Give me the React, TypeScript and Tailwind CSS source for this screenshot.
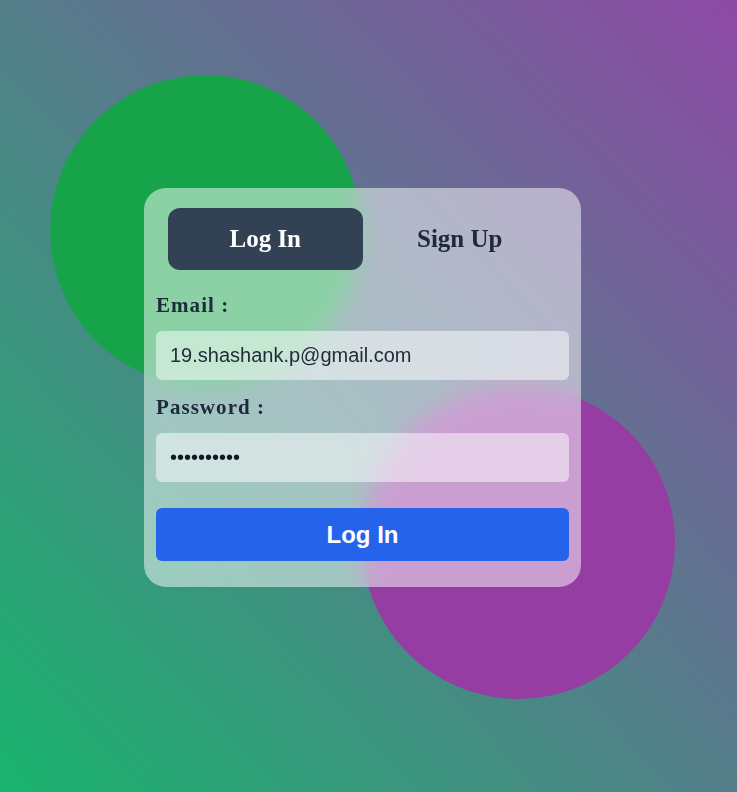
import React, { useState } from 'react';

export default function App() {
  const [tab, setTab] = useState<'login' | 'signup'>('login');
  const [email, setEmail] = useState('19.shashank.p@gmail.com');
  const [password, setPassword] = useState('1234567890');

  return (
    <div className="relative h-[792px] overflow-hidden bg-[linear-gradient(to_top_right,#19b46e,#8e49a6)] flex items-center justify-center pr-3 pb-[17px]">
      {/* background blobs */}
      <div className="absolute left-[50px] top-[75px] w-[311px] h-[311px] rounded-full bg-[#17a34a]" />
      <div className="absolute left-[362px] top-[386px] w-[313px] h-[313px] rounded-full bg-[#963da3]" />

      <div className="relative w-[437px] rounded-[22px] bg-white/50 backdrop-blur-md pb-[26px]">
        <div className="grid grid-cols-2 px-6 pt-5 font-['Liberation_Serif',serif]">
          <button
            onClick={() => setTab('login')}
            className={`h-[62px] rounded-xl text-[25px] font-bold ${
              tab === 'login' ? 'bg-[#334155] text-white' : 'text-[#1e293b]'
            }`}
          >
            Log In
          </button>
          <button
            onClick={() => setTab('signup')}
            className={`h-[62px] rounded-xl text-[25px] font-bold ${
              tab === 'signup' ? 'bg-[#334155] text-white' : 'text-[#1e293b]'
            }`}
          >
            Sign Up
          </button>
        </div>

        <form className="px-3 mt-[21px] flex flex-col" onSubmit={(e) => e.preventDefault()}>
          <label className="font-['Liberation_Serif',serif] text-[21px] leading-7 font-bold tracking-wider text-[#1e293b]">
            Email :
          </label>
          <input
            type="email"
            value={email}
            onChange={(e) => setEmail(e.target.value)}
            className="mt-3 h-[49px] rounded-md bg-white/50 px-3.5 font-['Liberation_Sans',Arial,sans-serif] text-xl text-[#1f2937] outline-none"
          />
          <label className="mt-[13px] font-['Liberation_Serif',serif] text-[21px] leading-7 font-bold tracking-wider text-[#1e293b]">
            Password :
          </label>
          <input
            type="password"
            value={password}
            onChange={(e) => setPassword(e.target.value)}
            className="mt-3 h-[49px] rounded-md bg-white/50 px-3.5 font-['Liberation_Sans',Arial,sans-serif] text-xl text-[#111827] outline-none"
          />
          <button
            type="submit"
            className="mt-[26px] h-[53px] rounded-md bg-[#2563eb] font-['Liberation_Sans',Arial,sans-serif] text-2xl font-bold text-white"
          >
            Log In
          </button>
        </form>
      </div>
    </div>
  );
}
